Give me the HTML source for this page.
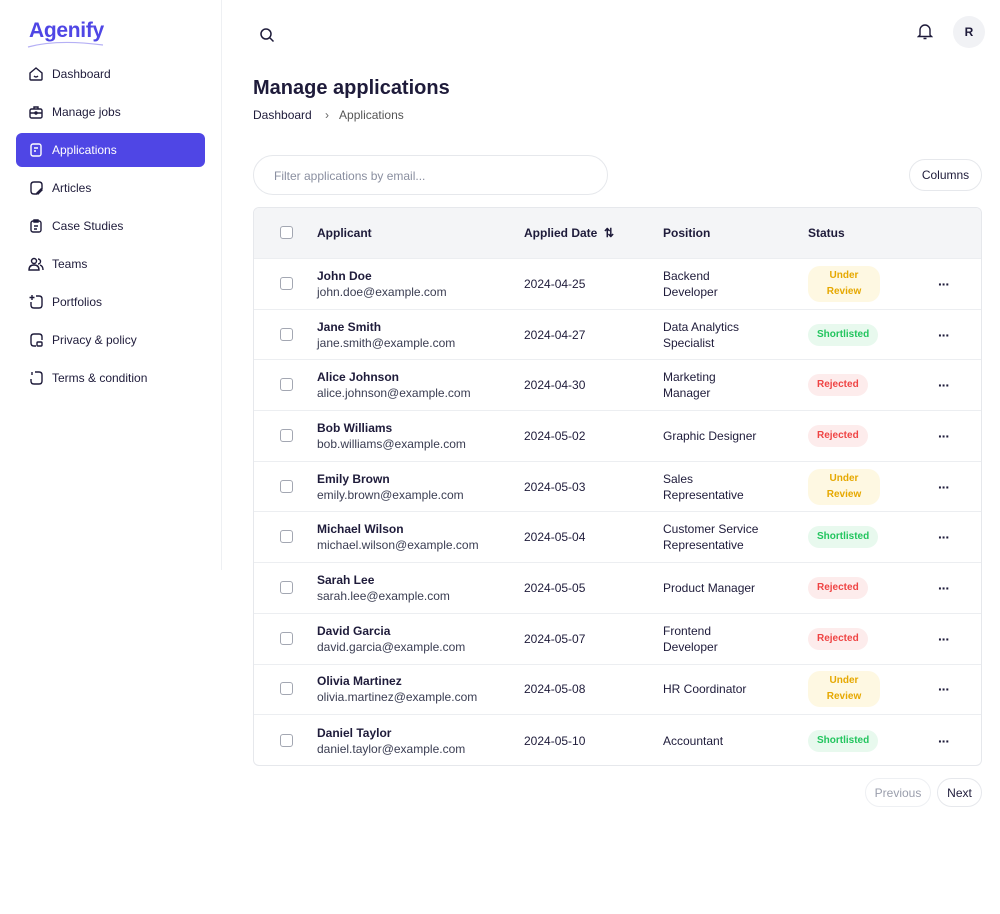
<!DOCTYPE html><html><head><style>
*{box-sizing:border-box;margin:0;padding:0}
body{width:1000px;height:914px;background:#fff;font-family:"Liberation Sans",sans-serif;color:#1e1b3a;position:relative;overflow:hidden}
.side{position:absolute;left:0;top:0;width:222px;height:570px;border-right:1px solid #eef0f3}
.logo{position:absolute;left:29px;top:19px;font-size:21px;font-weight:bold;color:#4f46e5;letter-spacing:-0.3px}
.nav{position:absolute;left:16px;width:189px;height:34px;border-radius:6px;display:flex;align-items:center;padding-left:12px;font-size:12px;color:#1e1b3a}
.nav svg{width:16px;height:16px;margin-right:8px;fill:none;stroke:#1e1b3a;stroke-width:1.4}
.nav.act{background:#4f46e5;color:#fff}.nav.act svg{stroke:#fff}
h1{position:absolute;left:253px;top:77px;font-size:20px;font-weight:bold}
.bc{position:absolute;left:253px;top:108px;font-size:12px;color:#1e1b3a}
.bc span{color:#555;margin-left:10px}
.filter{position:absolute;left:253px;top:155px;width:355px;height:40px;border:1px solid #e6e8ec;border-radius:20px;font-size:12px;color:#8a8fa0;padding:13px 20px}
.btn{position:absolute;border:1px solid #e6e8ec;border-radius:16px;font-size:12px;display:flex;align-items:center;justify-content:center}
.tbl{position:absolute;left:253px;top:207px;width:729px;height:559px;border:1px solid #e6e8ec;border-radius:6px;overflow:hidden}
.hd{height:51px;background:#f4f5f7;border-bottom:1px solid #eceef1;position:relative;font-size:12px;font-weight:bold}
.row{height:50.7px;border-bottom:1px solid #eceef1;position:relative;font-size:12px}
.row:last-child{border-bottom:none}
.cb{position:absolute;left:26px;width:13px;height:13px;border:1.3px solid #a3a7b2;border-radius:3px;top:50%;margin-top:-7px}
.c{position:absolute;top:50%;transform:translateY(-50%);line-height:16px}
.n{font-weight:bold}.e{color:#3a3d52}
.st{position:absolute;left:554px;top:50%;transform:translateY(-50%);font-size:10px;font-weight:bold;text-align:center;line-height:16px;border-radius:12px}
.ur{background:#fef8e2;color:#e6a800;width:72px;padding:2px 0}
.sl{background:#e8f9ee;color:#22c55e;padding:3px 9px}
.rj{background:#fdecec;color:#ef4444;padding:3px 9px}
.dots{position:absolute;left:684px;top:50%;transform:translateY(-50%);font-size:14px;font-weight:bold;letter-spacing:-1px}
</style></head><body>
<div class="side">
<div class="logo">Agenify<svg style="position:absolute;left:-2px;top:22px" width="78" height="8"><path d="M1 6 Q30 -2 76 4" stroke="#b5b0f5" stroke-width="1.2" fill="none"/></svg></div>
<div class="nav" style="top:57px"><svg viewBox="0 0 16 16"><path d="M2 7 L8 2 L14 7 V13 Q14 14 13 14 H3 Q2 14 2 13Z M6 10 Q8 12 10 10"/></svg>Dashboard</div>
<div class="nav" style="top:95px"><svg viewBox="0 0 16 16"><rect x="2" y="5" width="12" height="9" rx="1.5"/><path d="M6 5V3h4v2M2 9h12"/><circle cx="8" cy="9" r="1"/></svg>Manage jobs</div>
<div class="nav act" style="top:133px"><svg viewBox="0 0 16 16"><rect x="3" y="2" width="10" height="12" rx="2"/><path d="M6 6h4M6 9h2"/></svg>Applications</div>
<div class="nav" style="top:171px"><svg viewBox="0 0 16 16"><path d="M3 5Q3 2 6 2H11Q14 2 14 5V9M9 14H6Q3 14 3 11V5M10 14l4-4-1-1-4 4z"/></svg>Articles</div>
<div class="nav" style="top:209px"><svg viewBox="0 0 16 16"><rect x="3" y="3" width="10" height="11" rx="2"/><path d="M6 2h4v2H6zM6 8h4M6 11h3"/></svg>Case Studies</div>
<div class="nav" style="top:247px"><svg viewBox="0 0 16 16"><circle cx="6" cy="5" r="2.5"/><path d="M1 14Q1 9 6 9T11 14ZM10 3a2.5 2.5 0 010 5M12 9q3 1 3 5"/></svg>Teams</div>
<div class="nav" style="top:285px"><svg viewBox="0 0 16 16"><path d="M4 1v5M1.5 3.5h5M8 2h3q3 0 3 3v6q0 3-3 3H6q-3 0-3-3V8"/></svg>Portfolios</div>
<div class="nav" style="top:323px"><svg viewBox="0 0 16 16"><path d="M3 5Q3 2 6 2H11Q14 2 14 5V8M8 14H6Q3 14 3 11V5"/><rect x="9" y="10" width="5" height="4" rx="1"/></svg>Privacy &amp; policy</div>
<div class="nav" style="top:361px"><svg viewBox="0 0 16 16"><path d="M4 2v3M4 7v0M7 2h4q3 0 3 3v6q0 3-3 3H6q-3 0-3-3V9"/></svg>Terms &amp; condition</div>
</div>
<svg style="position:absolute;left:259px;top:27px" width="16" height="16" fill="none" stroke="#1e1b3a" stroke-width="1.5"><circle cx="7" cy="7" r="5"/><path d="M11 11l3.5 3.5"/></svg>
<svg style="position:absolute;left:917px;top:23px" width="16" height="17" fill="none" stroke="#1e1b3a" stroke-width="1.4"><path d="M3 12V7a5 5 0 0110 0v5l1.5 1.5h-13zM6.5 15.5h3"/></svg>
<div style="position:absolute;left:953px;top:16px;width:32px;height:32px;border-radius:50%;background:#f1f2f5;font-size:12px;font-weight:bold;display:flex;align-items:center;justify-content:center">R</div>
<h1>Manage applications</h1>
<div class="bc">Dashboard <span style="color:#666">›</span><span>Applications</span></div>
<div class="filter">Filter applications by email...</div>
<div class="btn" style="left:909px;top:159px;width:73px;height:32px">Columns</div>
<div class="tbl">
<div class="hd"><div class="cb" style="background:#fff"></div><div class="c" style="left:63px">Applicant</div><div class="c" style="left:270px">Applied Date &nbsp;⇅</div><div class="c" style="left:409px">Position</div><div class="c" style="left:554px">Status</div></div>
<div class="row"><div class="cb"></div><div class="c" style="left:63px"><div class="n">John Doe</div><div class="e">john.doe@example.com</div></div><div class="c" style="left:270px">2024-04-25</div><div class="c" style="left:409px">Backend<br>Developer</div><div class="st ur">Under<br>Review</div><div class="dots">···</div></div>
<div class="row"><div class="cb"></div><div class="c" style="left:63px"><div class="n">Jane Smith</div><div class="e">jane.smith@example.com</div></div><div class="c" style="left:270px">2024-04-27</div><div class="c" style="left:409px">Data Analytics<br>Specialist</div><div class="st sl">Shortlisted</div><div class="dots">···</div></div>
<div class="row"><div class="cb"></div><div class="c" style="left:63px"><div class="n">Alice Johnson</div><div class="e">alice.johnson@example.com</div></div><div class="c" style="left:270px">2024-04-30</div><div class="c" style="left:409px">Marketing<br>Manager</div><div class="st rj">Rejected</div><div class="dots">···</div></div>
<div class="row"><div class="cb"></div><div class="c" style="left:63px"><div class="n">Bob Williams</div><div class="e">bob.williams@example.com</div></div><div class="c" style="left:270px">2024-05-02</div><div class="c" style="left:409px">Graphic Designer</div><div class="st rj">Rejected</div><div class="dots">···</div></div>
<div class="row"><div class="cb"></div><div class="c" style="left:63px"><div class="n">Emily Brown</div><div class="e">emily.brown@example.com</div></div><div class="c" style="left:270px">2024-05-03</div><div class="c" style="left:409px">Sales<br>Representative</div><div class="st ur">Under<br>Review</div><div class="dots">···</div></div>
<div class="row"><div class="cb"></div><div class="c" style="left:63px"><div class="n">Michael Wilson</div><div class="e">michael.wilson@example.com</div></div><div class="c" style="left:270px">2024-05-04</div><div class="c" style="left:409px">Customer Service<br>Representative</div><div class="st sl">Shortlisted</div><div class="dots">···</div></div>
<div class="row"><div class="cb"></div><div class="c" style="left:63px"><div class="n">Sarah Lee</div><div class="e">sarah.lee@example.com</div></div><div class="c" style="left:270px">2024-05-05</div><div class="c" style="left:409px">Product Manager</div><div class="st rj">Rejected</div><div class="dots">···</div></div>
<div class="row"><div class="cb"></div><div class="c" style="left:63px"><div class="n">David Garcia</div><div class="e">david.garcia@example.com</div></div><div class="c" style="left:270px">2024-05-07</div><div class="c" style="left:409px">Frontend<br>Developer</div><div class="st rj">Rejected</div><div class="dots">···</div></div>
<div class="row"><div class="cb"></div><div class="c" style="left:63px"><div class="n">Olivia Martinez</div><div class="e">olivia.martinez@example.com</div></div><div class="c" style="left:270px">2024-05-08</div><div class="c" style="left:409px">HR Coordinator</div><div class="st ur">Under<br>Review</div><div class="dots">···</div></div>
<div class="row"><div class="cb"></div><div class="c" style="left:63px"><div class="n">Daniel Taylor</div><div class="e">daniel.taylor@example.com</div></div><div class="c" style="left:270px">2024-05-10</div><div class="c" style="left:409px">Accountant</div><div class="st sl">Shortlisted</div><div class="dots">···</div></div>
</div>
<div class="btn" style="left:865px;top:778px;width:66px;height:29px;color:#9a9eac;border-color:#eef0f3">Previous</div>
<div class="btn" style="left:937px;top:778px;width:45px;height:29px">Next</div>
</body></html>
